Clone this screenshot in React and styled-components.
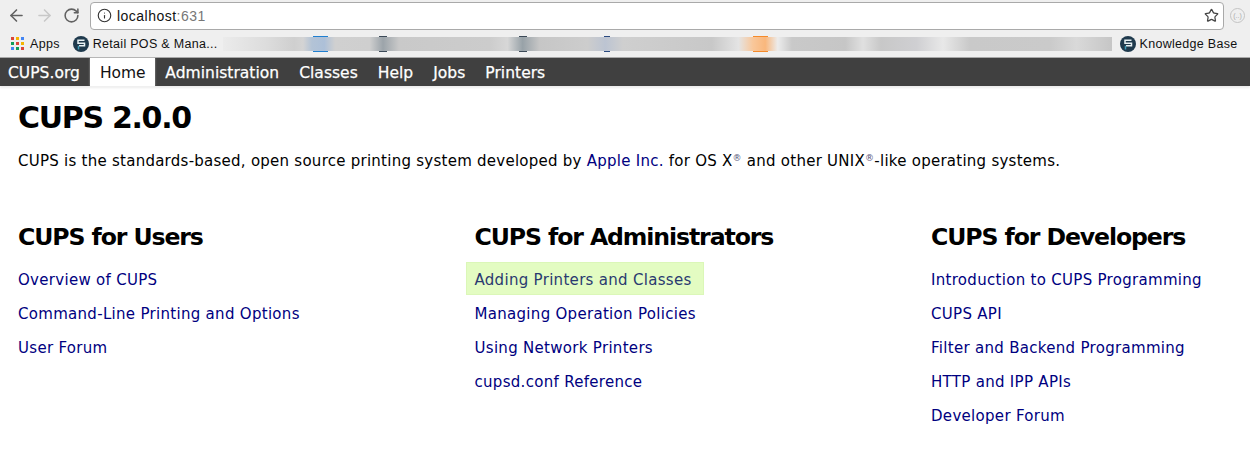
import React from 'react'
import styled, {createGlobalStyle} from 'styled-components'
import {ArrowLeft, ArrowRight, RotateCw, Info, Star} from 'lucide-react'

const GlobalStyle = createGlobalStyle`
    html, body {
        margin: 0;
        padding: 0;
        background: #fff;
        overflow: hidden;
    }
`;

const Page = styled.div`
    width: 1250px;
    height: 464px;
    overflow: hidden;
    font-family: "DejaVu Sans", sans-serif;
`;

const Toolbar = styled.div`
    height: 30px;
    background: #efefef;
    display: flex;
    align-items: center;
    box-sizing: border-box;
    padding: 0 0 0 7px;
`;

const NavIcons = styled.div`
    display: flex;
    align-items: center;
    gap: 9px;
    width: 83px;
    flex-shrink: 0;
    color: #616161;
`;

const AddressBar = styled.div`
    width: 1134px;
    height: 28px;
    margin-top: 1px;
    flex-shrink: 0;
    box-sizing: border-box;
    background: #fff;
    border: 1px solid #a9a9a9;
    border-radius: 4px;
    display: flex;
    align-items: center;
    padding: 0 4px 0 6px;
    color: #444;
`;

const Url = styled.div`
    margin-left: 5px;
    flex: 1;
    font-family: "Liberation Sans", sans-serif;
    font-size: 14px;
    letter-spacing: 0.48px;
    color: #111;
    span {
        color: #777;
    }
`;

const ExtensionIcon = styled.div`
    width: 15px;
    height: 15px;
    margin-left: 6px;
    flex-shrink: 0;
    box-sizing: border-box;
    border: 1px solid #c4c4c4;
    border-radius: 50%;
    color: #aaa;
    font-family: "Liberation Sans", sans-serif;
    font-size: 7px;
    line-height: 13px;
    text-align: center;
`;

const Bookmarks = styled.div`
    height: 28px;
    box-sizing: border-box;
    background: #efefef;
    border-bottom: 1px solid #a8a8a8;
    display: flex;
    align-items: center;
    padding-left: 11px;
    font-family: "Liberation Sans", sans-serif;
    font-size: 12.5px;
    letter-spacing: 0.3px;
    color: #111;
`;

const Bookmark = styled.div`
    display: flex;
    align-items: center;
    gap: ${props => props.gap || 4}px;
    margin-right: ${props => props.space || 0}px;
    white-space: nowrap;
    flex-shrink: 0;
`;

const AppsGrid = styled.div`
    display: grid;
    grid-template-columns: repeat(3, 3px);
    grid-auto-rows: 3px;
    gap: 2px;
`;

const AppsDot = styled.i`
    display: block;
    background: ${props => props.color};
`;

const BlurredStrip = styled.div`
    position: relative;
    width: 889px;
    height: 14px;
    margin-right: 8px;
    flex-shrink: 0;
    background: linear-gradient(90deg,
        #ebebeb 0, #dcdcdc 5%, #cfcfcf 8%, #d4d4d4 9%, #b3c3d6 10%, #adc0d8 11.4%, #d0d0d0 12.6%,
        #cfcfcf 16.5%, #9ca4aa 18%, #c9c9c9 19.8%, #cccccc 30%, #d7d7d7 32%, #98a2a8 33.7%, #c6c6c6 35.6%,
        #cdcdcd 41%, #bcc4d2 43%, #cfcfcf 45%, #c8c8c8 55%, #e4e4e4 58%, #f9c79a 59.6%, #f9b77c 61%,
        #ececec 62.4%, #c9c9c9 64%, #c6c6c6 70%, #e0e0e0 72%, #c8c8c8 74%, #cfcfd2 78%, #e8e8e8 81%,
        #c9c9c9 84%, #cacaca 93%, #d9d9d9 96%, #c6c6c6 100%);
`;

const StripMark = styled.i`
    position: absolute;
    left: ${props => props.left}px;
    top: ${props => props.bottom ? '14px' : '-1px'};
    width: ${props => props.size}px;
    height: 1px;
    background: ${props => props.color};
`;

const Nav = styled.nav`
    height: 28px;
    background: #404040;
    display: flex;
    align-items: stretch;
    gap: 20px;
    padding-left: 8px;
    box-shadow: 0 2px 2px rgba(0, 0, 0, 0.08);
`;

const NavItem = styled.a`
    display: flex;
    align-items: center;
    padding-top: 1px;
    color: #fff;
    font-size: 15.5px;
    letter-spacing: 0.03px;
    white-space: nowrap;
    -webkit-text-stroke: 0.25px #fff;
`;

const ActiveItem = styled(NavItem)`
    margin: 0 -10px;
    padding: 1px 10px 0;
    background: #fff;
    color: #111;
    letter-spacing: -0.1px;
    -webkit-text-stroke: 0;
    box-shadow: 0 0 2px rgba(255, 255, 255, 0.5);
`;

const Content = styled.main`
    padding: 13px 0 0 18px;
`;

const Title = styled.h1`
    margin: 0;
    font-size: 30px;
    line-height: 38px;
    font-weight: bold;
    letter-spacing: -1.3px;
    color: #000;
`;

const Intro = styled.p`
    margin: 14px 0 0;
    font-size: 15px;
    line-height: 20px;
    letter-spacing: 0.255px;
    color: #000;
    white-space: nowrap;
    sup {
        font-size: 9px;
        line-height: 0;
        vertical-align: 5px;
        color: #55557a;
    }
`;

const Link = styled.a`
    color: #000080;
`;

const Columns = styled.div`
    display: grid;
    grid-template-columns: 456.5px 456.5px 1fr;
    margin-top: 51px;
`;

const Heading = styled.h2`
    margin: 0 0 11px;
    font-size: 23.6px;
    line-height: 30px;
    font-weight: bold;
    letter-spacing: -1.1px;
    color: #000;
    white-space: nowrap;
`;

const LinkRow = styled.div`
    height: 34px;
    display: flex;
    align-items: center;
    font-size: 15px;
    letter-spacing: 0.3px;
    white-space: nowrap;
    color: #000080;
`;

const HoverRow = styled(LinkRow)`
    position: relative;
    color: #2a3a70;
    &::before {
        content: "";
        position: absolute;
        left: -9px;
        top: -1px;
        width: 238px;
        height: 33px;
        background: #e3fcc2;
        border: 1px solid #dbf7b8;
        box-sizing: border-box;
    }
    span {
        position: relative;
    }
`;

const marks = [
    [90, 15, '#1f7fd0'], [156, 8, '#3c4a58'], [296, 8, '#3c4a58'], [381, 6, '#2a4a80'], [530, 15, '#f58a2a'],
]

const dots = ['#db4437', '#f4b400', '#4285f4', '#0f9d58', '#db4437', '#f4b400', '#4285f4', '#0f9d58', '#db4437']

const navItems = ['Administration', 'Classes', 'Help', 'Jobs', 'Printers']

const users = ['Overview of CUPS', 'Command-Line Printing and Options', 'User Forum']
const admins = ['Managing Operation Policies', 'Using Network Printers', 'cupsd.conf Reference']
const developers = ['Introduction to CUPS Programming', 'CUPS API', 'Filter and Backend Programming', 'HTTP and IPP APIs', 'Developer Forum']

const LogoIcon = () => (
    <svg width="16" height="16" viewBox="0 0 16 16">
        <circle cx="8" cy="8" r="8" fill="#1f3a4d" />
        <path d="M11.5 4.2 H5 V7.2 H11.5 V9.8 H6" fill="none" stroke="#e8f1f4" strokeWidth="1.5" />
        <path d="M5.5 9.8 V13.5" fill="none" stroke="#3f9bb5" strokeWidth="1.5" />
    </svg>
)

const App = () => {
    return (
        <Page>
            <GlobalStyle />
            <Toolbar>
                <NavIcons>
                    <ArrowLeft size={19} strokeWidth={2} />
                    <ArrowRight size={19} strokeWidth={2} color="#c8c8c8" />
                    <RotateCw size={17} strokeWidth={2.2} />
                </NavIcons>
                <AddressBar>
                    <Info size={15} strokeWidth={1.8} color="#333" />
                    <Url>localhost<span>:631</span></Url>
                    <Star size={15} strokeWidth={2} />
                </AddressBar>
                <ExtensionIcon>(..)</ExtensionIcon>
            </Toolbar>
            <Bookmarks>
                <Bookmark gap={6} space={13}>
                    <AppsGrid>
                        {dots.map((color, i) => <AppsDot key={i} color={color} />)}
                    </AppsGrid>
                    Apps
                </Bookmark>
                <Bookmark space={5}>
                    <LogoIcon />
                    Retail POS &amp; Mana...
                </Bookmark>
                <BlurredStrip>
                    {marks.map(([left, size, color], i) => (
                        <React.Fragment key={i}>
                            <StripMark left={left} size={size} color={color} />
                            <StripMark bottom left={left} size={size} color={color} />
                        </React.Fragment>
                    ))}
                </BlurredStrip>
                <Bookmark>
                    <LogoIcon />
                    Knowledge Base
                </Bookmark>
            </Bookmarks>
            <Nav>
                <NavItem>CUPS.org</NavItem>
                <ActiveItem>Home</ActiveItem>
                {navItems.map(label => <NavItem key={label}>{label}</NavItem>)}
            </Nav>
            <Content>
                <Title>CUPS 2.0.0</Title>
                <Intro>
                    CUPS is the standards-based, open source printing system developed by <Link>Apple Inc.</Link> for OS X<sup>®</sup> and other UNIX<sup>®</sup>-like operating systems.
                </Intro>
                <Columns>
                    <section>
                        <Heading>CUPS for Users</Heading>
                        {users.map(label => <LinkRow key={label}>{label}</LinkRow>)}
                    </section>
                    <section>
                        <Heading>CUPS for Administrators</Heading>
                        <HoverRow><span>Adding Printers and Classes</span></HoverRow>
                        {admins.map(label => <LinkRow key={label}>{label}</LinkRow>)}
                    </section>
                    <section>
                        <Heading>CUPS for Developers</Heading>
                        {developers.map(label => <LinkRow key={label}>{label}</LinkRow>)}
                    </section>
                </Columns>
            </Content>
        </Page>
    )
}

export default App
